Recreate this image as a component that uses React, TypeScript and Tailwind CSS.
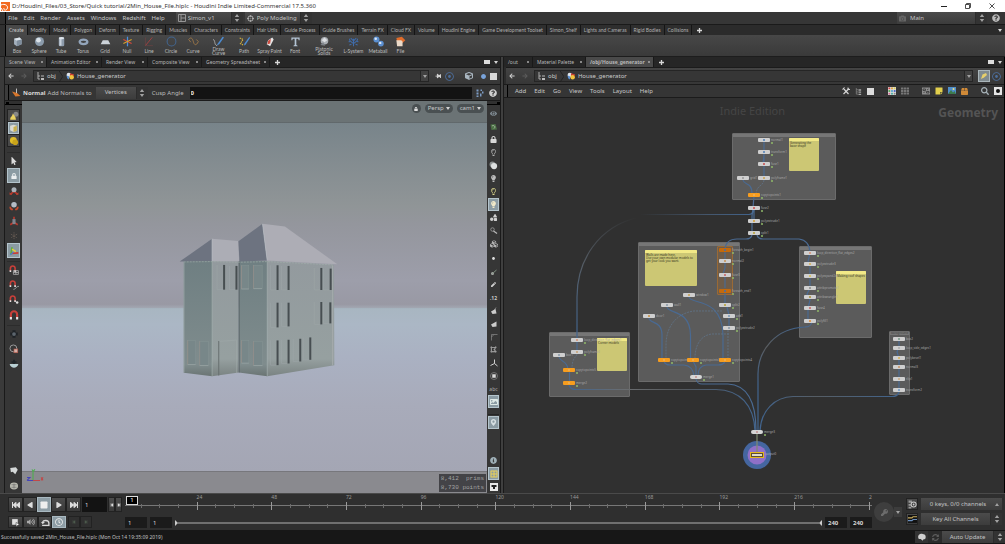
import React from "react";
import {
  FaLock, FaMousePointer, FaEye, FaLightbulb, FaRegLightbulb, FaQuestionCircle, FaInfoCircle,
  FaMapMarkerAlt, FaKey, FaThumbtack, FaSyncAlt, FaSearch, FaCube, FaCubes, FaShapes, FaPen,
  FaCamera, FaImage, FaBox, FaVolumeUp, FaRegClock,
  FaStepBackward, FaStepForward, FaFastBackward, FaFastForward, FaPlay, FaStop, FaCircle,
  FaRegDotCircle, FaTh, FaBorderAll, FaArrowLeft, FaArrowRight, FaStickyNote,
  FaCrosshairs, FaDrawPolygon,
} from "react-icons/fa";

type Kids = { children?: React.ReactNode };

function Caret({ className = "text-neutral-300" }: { className?: string }) {
  return (
    <svg viewBox="0 0 4 3" className={`h-[3px] w-[4px] shrink-0 ${className}`} aria-hidden="true">
      <path d="M0 0H4L2 3Z" fill="currentColor" />
    </svg>
  );
}

function UpDown() {
  return (
    <svg viewBox="0 0 6 8" className="pointer-events-none h-[8px] w-[6px] shrink-0 text-neutral-400" aria-hidden="true">
      <path d="M3 0L5.2 3H.8ZM3 8L.8 5H5.2Z" fill="currentColor" />
    </svg>
  );
}

function Plus() {
  return (
    <svg viewBox="0 0 6 6" className="h-[5px] w-[5px]" aria-hidden="true">
      <path d="M3 0V6M0 3H6" stroke="#d8d8d8" strokeWidth="1.6" />
    </svg>
  );
}

function Picker({ label, value, icon, className, center }: { label: string; value: string; icon?: React.ReactNode; className: string; center?: boolean }) {
  return (
    <div className={`flex items-center bg-gradient-to-b from-[#4b4b4b] to-[#3c3c3c] text-[#c4c4c4] ${className}`}>
      {icon}
      <select aria-label={label} className={`h-full min-w-0 flex-1 appearance-none bg-transparent leading-normal outline-none ${center ? "text-center" : ""}`} defaultValue={value}>
        <option>{value}</option>
      </select>
      <span className="flex h-full w-[12px] shrink-0 items-center justify-center border-l border-[#2c2c2c] bg-[#333]">
        <UpDown />
      </span>
    </div>
  );
}

/* ---------- Shelf ---------- */

const shelfTabs = [
  "Create", "Modify", "Model", "Polygon", "Deform", "Texture", "Rigging", "Muscles", "Characters", "Constraints",
  "Hair Utils", "Guide Process", "Guide Brushes", "Terrain FX", "Cloud FX", "Volume", "Houdini Engine",
  "Game Development Toolset", "Simon_Shelf", "Lights and Cameras", "Rigid Bodies", "Collisions",
];

const shelfTools: { name: string; width: string; art: React.ReactNode }[] = [
  { name: "Box", width: "w-[22px]", art: <><path d="M3 4L11 2L14 5V12L7 15L3 12Z" fill="#a4b0bd" /><path d="M3 4L11 2L14 5L7 7Z" fill="#dde4ea" /><path d="M7 7L14 5V12L7 15Z" fill="#7f8d9c" /></> },
  { name: "Sphere", width: "w-[22px]", art: <><circle cx="8" cy="8" r="6.6" fill="#8b9bab" /><circle cx="6.5" cy="6" r="3.4" fill="#dbe2e8" /></> },
  { name: "Tube", width: "w-[22px]", art: <><rect x="4" y="2" width="8" height="13" rx="2" fill="#8d9bab" /><rect x="5" y="4" width="3" height="10" fill="#c9d2dc" /><ellipse cx="8" cy="3" rx="4" ry="1.7" fill="#e0e6ec" /></> },
  { name: "Torus", width: "w-[22px]", art: <ellipse cx="8" cy="8.5" rx="5.6" ry="3.2" fill="none" stroke="#93a5bb" strokeWidth="3.4" /> },
  { name: "Grid", width: "w-[22px]", art: <path d="M4 6H12L15 12H1Z" fill="#ccd2d8" /> },
  { name: "Null", width: "w-[22px]", art: <><path d="M8 1V15" stroke="#4b90e0" strokeWidth="1.8" /><path d="M2 5L14 11" stroke="#d8493a" strokeWidth="1.8" /><path d="M14 5L2 11" stroke="#d6a32c" strokeWidth="1.8" /></> },
  { name: "Line", width: "w-[22px]", art: <><path d="M2 14L12 2" stroke="#b04040" strokeWidth="1.2" /><path d="M2 14H13M2 2V14" stroke="#744" strokeWidth=".8" /></> },
  { name: "Circle", width: "w-[22px]", art: <circle cx="8" cy="8" r="6.4" fill="none" stroke="#42658f" strokeWidth="1.5" /> },
  { name: "Curve", width: "w-[22px]", art: <path d="M1 5C5 0 7 5 8 9S12 15 15 8M1 5L4 9M12 5L15 8" fill="none" stroke="#a07848" strokeWidth="1.3" /> },
  { name: "Draw Curve", width: "w-[29px]", art: <><path d="M14 1L7 11L5 14L9 12L16 2Z" fill="#4d8bd0" /><path d="M0 5C4 6 1 13 6 14" stroke="#bbb" strokeWidth="1.2" fill="none" /></> },
  { name: "Path", width: "w-[22px]", art: <><path d="M15 1L8 11L7 14L10 12L16 3Z" fill="#4d8bd0" /><path d="M1 3L6 5L2 11L6 13" stroke="#d8b43c" strokeWidth="1.6" strokeDasharray="2 1" fill="none" /></> },
  { name: "Spray Paint", width: "w-[29px]", art: <><path d="M6 6L12 2L14 5L9 15L4 12Z" fill="#e6e6e6" /><path d="M6 7L10 4L9 11L5 12Z" fill="#cc4c40" /></> },
  { name: "Font", width: "w-[22px]", art: <path d="M2 2H14V6H12.6L12 4H9.2V13L11 14V15H5V14L6.8 13V4H4L3.4 6H2Z" fill="#b4c4d4" /> },
  { name: "Platonic Solids", width: "w-[36px]", art: <><circle cx="8" cy="7" r="5.5" fill="#a8adb2" /><path d="M4 6L8 2L12 6L8 9Z" fill="#dcdfe2" /><path d="M2 13L6 9L9 14Z" fill="#7c8288" /></> },
  { name: "L-System", width: "w-[23px]", art: <path d="M8 15V4M8 11L3 7M8 11L13 7M8 7L4 3M8 7L12 3M3 7L1 9M3 7L2 4M13 7L15 9M13 7L14 4M5 12L2 13M11 12L14 13" stroke="#3f6cab" strokeWidth="1.5" fill="none" /> },
  { name: "Metaball", width: "w-[26px]", art: <><circle cx="5" cy="5" r="4.4" fill="#5b8fd0" /><circle cx="4" cy="4" r="1.8" fill="#dbe8f6" /><circle cx="11.5" cy="11" r="4.2" fill="#5b8fd0" /><circle cx="10.5" cy="10" r="1.8" fill="#dbe8f6" /></> },
  { name: "File", width: "w-[19px]", art: <><path d="M2 3L10 1L15 6L12 9L4 14Z" fill="#e06c2a" /><path d="M2 6H9L11 8V15H3Z" fill="#ead9c8" /></> },
];

function Shelf() {
  return (
    <section aria-label="Shelf" className="flex border-b border-[#1d1d1d] bg-[#2b2b2b] font-['Lato',sans-serif]">
      <div className="w-[6px] shrink-0 border-r border-black bg-[#303030]" />
      <div className="min-w-0 flex-1">
        <div className="flex h-[10px] items-stretch text-[5px] leading-[10px] text-[#b0b0b0]">
          {shelfTabs.map((t, i) => (
            <button key={t} className={`shrink-0 border-r border-[#151515] px-[3px] ${i === 0 ? "bg-[#484848] text-[#c8c8c8]" : "bg-[#2e2e2e]"}`}>{t}</button>
          ))}
          <button aria-label="Add shelf" className="flex w-[14px] items-center justify-center"><Plus /></button>
          <div className="flex flex-1 items-center justify-end pr-[3px]"><Caret /></div>
        </div>
        <div className="flex h-[21px] bg-gradient-to-b from-[#474747] to-[#3a3a3a] text-[#bcbcbc]">
          {shelfTools.map((t) => (
            <button key={t.name} className={`flex shrink-0 flex-col items-center pt-[1px] ${t.width}`}>
              <svg viewBox="0 0 16 16" className="h-[11px] w-[11px] shrink-0" aria-hidden="true">{t.art}</svg>
              <span className={`text-[5px] ${t.name === "Draw Curve" || t.name === "Platonic Solids" ? "w-[20px] leading-[4px]" : "whitespace-nowrap leading-[8px]"}`}>{t.name}</span>
            </button>
          ))}
        </div>
      </div>
    </section>
  );
}

/* ---------- Pane header pieces ---------- */

function PaneTabs({ tabs, active, bold }: { tabs: { name: string; w: string }[]; active: number; bold?: boolean }) {
  return (
    <div className="flex h-[10px] shrink-0 bg-[#262626] text-[5px] leading-[10px] text-[#b8b8b8]">
      {tabs.map((t, i) => (
        <button key={t.name} className={`flex shrink-0 items-center justify-between border-r border-[#191919] pr-[3px] pl-[4px] whitespace-nowrap ${t.w} ${i === active ? (bold ? "bg-[#4a4a4a] font-bold" : "bg-[#3b3b3b]") : ""}`}>
          {t.name}
          <span className="h-[2px] w-[2px] rounded-full bg-[#aaa]" />
        </button>
      ))}
      <button aria-label="New tab" className="flex w-[14px] items-center justify-center"><Plus /></button>
      <div className="flex flex-1 items-center justify-end gap-[4px] pr-[2px]">
        <span className="h-[4px] w-[6px] bg-[#dcdcdc]" />
        <Caret />
      </div>
    </div>
  );
}

function HouseIcon() {
  return (
    <svg viewBox="0 0 16 14" className="h-[8px] w-[9px] shrink-0" aria-hidden="true">
      <circle cx="5" cy="5" r="4" fill="#dfe4ea" />
      <path d="M7 2L14 4L13 10L7 11Z" fill="#cc3c32" />
      <circle cx="10" cy="9" r="4" fill="#f0c33c" />
      <path d="M1 6L6 8L5 13L2 11Z" fill="#5b8fd0" />
    </svg>
  );
}

function PathBar({ children }: Kids) {
  return (
    <div className="flex h-[17px] shrink-0 items-center border-t border-[#1b1b1b] bg-gradient-to-b from-[#444] to-[#363636] px-[3px]">
      <button aria-label="Back" className="flex w-[13px] items-center"><FaArrowLeft size={6} color="#d0d0d0" /></button>
      <button aria-label="Forward" className="flex w-[12px] items-center"><FaArrowRight size={6} color="#5c5c5c" /></button>
      <nav aria-label="Network path" className="flex h-[12px] min-w-0 flex-1 items-center border border-[#252525] bg-[#363636] text-[6px] text-[#cacaca]">
        <svg viewBox="0 0 8 8" className="ml-[3px] h-[8px] w-[8px]" aria-hidden="true">
          <path d="M1 0V7H3M1 4H3" stroke="#aaa" fill="none" /><rect x="4" y="3" width="3" height="2" fill="#777" /><rect x="4" y="6" width="3" height="2" fill="#bbb" />
        </svg>
        <a href="#obj" className="ml-[2px]">obj</a>
        <svg viewBox="0 0 4 12" className="mx-[3px] h-[11px] w-[4px]" aria-hidden="true"><path d="M0 0L4 6L0 12" fill="none" stroke="#222" /></svg>
        <HouseIcon />
        <a href="#house" className="ml-[2px] flex-1">House_generator</a>
        <button aria-label="Path history" className="flex h-full w-[8px] items-center justify-center border-l border-[#252525] bg-[#414141]"><Caret className="text-neutral-400" /></button>
      </nav>
      {children}
    </div>
  );
}

/* ---------- Viewport ---------- */

function ToolButton({ label, active, children, size = "h-[15px]" }: Kids & { label: string; active?: boolean; size?: string }) {
  return (
    <button aria-label={label} className={`flex w-full shrink-0 items-center justify-center ${size} ${active ? "border border-[#b4c4cc] bg-[#8b9ba3]" : ""}`}>
      {children}
    </button>
  );
}

function Art({ children, s = "h-[10px] w-[10px]" }: Kids & { s?: string }) {
  return <svg viewBox="0 0 16 16" className={s} aria-hidden="true">{children}</svg>;
}

function LeftTools() {
  return (
    <div className="flex w-[17px] shrink-0 flex-col bg-[#363636] px-[2px]">
      <div className="-mx-[2px] mb-[4px] flex h-[4px] items-center border-b border-black bg-[#303030] pl-[1px]"><span className="h-[2px] w-[3px] bg-black" /></div>
      <div className="flex flex-col gap-px border border-[#222] bg-[#222]">
        <div className="bg-[#4a4a4a]"><ToolButton label="Objects" size="h-[11px]"><Art><circle cx="11" cy="5" r="4" fill="#888" /><path d="M2 14C2 8 5 10 6 4C9 8 11 9 11 14Z" fill="#e8d060" /></Art></ToolButton></div>
        <ToolButton label="Geometry" size="h-[12px]" active><Art><path d="M2 4L8 2L14 4V13L8 15L2 12Z" fill="#dcdcd2" /><path d="M8 6L14 4V13L8 15Z" fill="#c8b050" /></Art></ToolButton>
        <div className="bg-[#4a4a4a]"><ToolButton label="Dynamics" size="h-[11px]"><Art><circle cx="7" cy="7" r="5.5" fill="#e0bd28" /><circle cx="10" cy="10" r="4.5" fill="#c9a41a" /></Art></ToolButton></div>
      </div>
      <div className="mt-[5px] flex flex-col border-t border-[#2c2c2c]">
        <ToolButton label="Select"><FaMousePointer size={8} color="#dcdcdc" /></ToolButton>
        <ToolButton label="Secure selection" active><FaLock size={6} color="#eceff0" /></ToolButton>
        <ToolButton label="Move"><Art><path d="M8 8L3 13M8 8L13 13" stroke="#b8392e" strokeWidth="2.6" /><path d="M1 10V14H5ZM15 10V14H11Z" fill="#c9402f" /><circle cx="8" cy="6" r="4" fill="#aab2ba" /></Art></ToolButton>
        <ToolButton label="Rotate"><Art><path d="M2 9C2 15 6 13 6 13M14 9C14 15 10 13 10 13" stroke="#c4492e" strokeWidth="3" fill="none" /><circle cx="8" cy="6" r="4.4" fill="#b4bcc6" /></Art></ToolButton>
        <ToolButton label="Scale"><Art><path d="M8 1V10M8 10L2 14M8 10L14 14" stroke="#b8392e" strokeWidth="2.6" /><rect x="5.5" y="5" width="5" height="8" fill="#7d858e" /></Art></ToolButton>
        <ToolButton label="Pose"><Art><path d="M8 2V14M3 5L13 11M13 5L3 11" stroke="#665a52" strokeWidth="1.4" strokeDasharray="2 1" /></Art></ToolButton>
        <ToolButton label="Handles" active><Art><path d="M3 13L5 2" stroke="#5fae3c" strokeWidth="2.6" /><path d="M4 12L15 11" stroke="#cf3c30" strokeWidth="2.6" /><path d="M5 5L11 9" stroke="#e4cf3c" strokeWidth="2.6" /><path d="M2 14L7 10" stroke="#4a7cc8" strokeWidth="2" /></Art></ToolButton>
      </div>
      <div className="mt-[3px] flex flex-col border-t border-[#2c2c2c]">
        {["Grid snapping", "Primitive snapping", "Point snapping", "Multi snapping"].map((n, i) => (
          <ToolButton key={n} label={n}>
            <Art>
              <g transform={i === 3 ? "translate(0 0)" : "scale(.75)"}>
                <path d="M3 13V7A5 5 0 0 1 13 7V13" stroke="#c9403a" strokeWidth="3.4" fill="none" />
                <path d="M3 15V11M13 15V11" stroke="#e4e4e4" strokeWidth="3.4" />
              </g>
              {i === 0 && <path d="M7 9H15V15H7ZM11 9V15M7 12H15" stroke="#ccc" fill="none" />}
              {i === 1 && <path d="M7 15C11 15 11 10 16 10" stroke="#ccc" fill="none" />}
              {i === 2 && <circle cx="13" cy="12" r="2" fill="#ddd" />}
            </Art>
          </ToolButton>
        ))}
      </div>
      <div className="mt-[3px] flex flex-col border-t border-[#2c2c2c]">
        <ToolButton label="View pivot"><Art><path d="M8 2V14M2 8H14" stroke="#1e2226" strokeWidth="5" /><circle cx="8" cy="8" r="3" fill="#5c656d" /></Art></ToolButton>
        <ToolButton label="Construction plane"><Art><circle cx="7" cy="7" r="5.5" fill="none" stroke="#999" strokeWidth="1.6" /><rect x="8" y="8" width="6" height="6" fill="#d3b0a8" stroke="#b8594a" /></Art></ToolButton>
        <ToolButton label="Inspect"><Art><path d="M1 8C3 16 13 16 15 8Z" fill="#b9d0d4" /><path d="M8 1V8M4 5H12" stroke="#20262a" strokeWidth="3" /></Art></ToolButton>
      </div>
      <div className="mt-auto flex flex-col">
        <ToolButton label="Render region"><Art><path d="M2 3L11 2L14 6L10 13L6 9L3 10Z" fill="#d4d8d8" /></Art></ToolButton>
        <ToolButton label="Flipbook"><Art><ellipse cx="8" cy="8" rx="6.5" ry="5.5" fill="#b9bab0" /><path d="M4 6H12M4 10H12M8 4V12" stroke="#666" /></Art></ToolButton>
      </div>
    </div>
  );
}

const displayTop: [string, React.ReactNode, boolean?][] = [
  ["Display", <FaEye size={7} color="#7f8a92" />],
  ["Visibility", <Art s="h-[8px] w-[8px]"><path d="M1 3L11 2L14 13L3 14Z" fill="#4c7046" /><path d="M4 6C8 3 12 8 8 11" stroke="#b9c8b4" strokeWidth="1.6" fill="none" /></Art>],
  ["Lock camera", <FaLock size={7} color="#d9d9d9" />],
  ["Lighting off", <FaRegLightbulb size={7} color="#b0b0b0" />],
  ["Shading", <Art s="h-[9px] w-[9px]"><circle cx="6" cy="6" r="5" fill="#8c9090" /><circle cx="9" cy="9" r="5.5" fill="#dde0e0" /></Art>],
  ["Headlight", <FaLightbulb size={7} color="#bdbdbd" />],
  ["Normal lighting", <FaRegLightbulb size={7} color="#d9d48a" />],
  ["High quality lighting", <FaLightbulb size={7} color="#f0e8c8" />, true],
  ["Shadows", <FaShapes size={7} color="#d0d0d0" />],
  ["Points", <Art s="h-[8px] w-[8px]"><circle cx="5" cy="5" r="3.5" fill="none" stroke="#a0a0a0" strokeWidth="1.6" /><path d="M7 8L14 13" stroke="#b8b8b8" strokeWidth="2.6" /></Art>],
  ["Objects", <FaCubes size={8} color="#b4b4b4" />],
];
const displayMid: [string, React.ReactNode, boolean?][] = [
  ["Point markers", <FaCircle size={3} color="#dedede" />],
  ["Point normals", <Art s="h-[8px] w-[8px]"><circle cx="5" cy="11" r="3" fill="#a4a8a4" /><path d="M5 11L13 4" stroke="#7f8f7f" strokeWidth="2" /></Art>],
  ["Point trails", <FaPen size={5} color="#cfcfcf" />],
  ["Point numbers", <span className="text-[5px] font-bold text-[#ccc]">.12</span>],
  ["Primitive normals", <Art s="h-[8px] w-[8px]"><path d="M2 9L11 4L13 13L5 14Z" fill="#ccc" /><path d="M7 9L12 1" stroke="#ccc" /></Art>],
  ["Primitive numbers", <Art s="h-[8px] w-[8px]"><path d="M2 9L13 3V13L5 14Z" fill="#ccc" /></Art>],
  ["Hulls", <Art s="h-[8px] w-[8px]"><path d="M3 15V3H15M3 8L8 3" stroke="#8a8a8a" strokeWidth="1.4" fill="none" /></Art>],
  ["Breakpoints", <FaDrawPolygon size={7} color="#b4b4b4" />],
  ["Axis", <Art s="h-[8px] w-[8px]"><path d="M9 1V9L1 13M9 9L15 14" stroke="#d0d0d0" strokeWidth="2" fill="none" /></Art>],
  ["Selection", <Art s="h-[8px] w-[8px]"><circle cx="8" cy="8" r="7" fill="none" stroke="#8a8a8a" strokeWidth="1.4" /><rect x="4.5" y="4.5" width="7" height="7" fill="#d8d8d8" /></Art>],
  ["Text", <span className="text-[5px] text-[#aaa]">abc</span>],
  ["Background image", <FaImage size={8} color="#dfe9e6" />, true],
];

function RightTools() {
  return (
    <div className="flex w-[13px] shrink-0 flex-col bg-[#363636] px-px">
      <div className="-mx-px mb-[2px] flex h-[4px] items-center justify-end border-b border-black bg-[#303030]"><span className="h-[2px] w-[3px] bg-black" /></div>
      {displayTop.map(([n, g, a]) => <ToolButton key={n} label={n} active={a} size="h-[13px]">{g}</ToolButton>)}
      <div className="mt-[2px]">{displayMid.map(([n, g, a]) => <ToolButton key={n} label={n} active={a} size="h-[13px]">{g}</ToolButton>)}</div>
      <div className="mt-[6px] border-t border-[#262626] pt-[1px]"><ToolButton label="Pin" active size="h-[13px]"><FaMapMarkerAlt size={7} color="#d6dfe2" /></ToolButton></div>
      <div className="mt-auto">
        <ToolButton label="Info" size="h-[13px]"><FaInfoCircle size={7} color="#9fb0b8" /></ToolButton>
        <ToolButton label="Layout" active size="h-[13px]"><FaBorderAll size={8} color="#ecd25a" /></ToolButton>
        <ToolButton label="Snapshot" size="h-[13px]"><Art s="h-[8px] w-[8px]"><rect width="16" height="16" fill="#e8e8e8" /><path d="M3 4H13V8H10V12H6V8H3Z" fill="#222" /></Art></ToolButton>
      </div>
    </div>
  );
}

/* Slit windows on the lit facades as [x, top, bottom], in house units. */
const slits: [number, number, number][] = [
  [191, 165, 239], [228, 168, 239], [351, 166, 240], [384, 168, 240], [482, 174, 240], [510, 176, 240],
  [351, 278, 352], [384, 278, 349], [482, 276, 343], [509, 277, 340],
  [351, 391, 465], [384, 389, 460], [419, 386, 454], [449, 382, 449],
];
const panes: [number, number, number, number][] = [
  [82, 391, 24, 72], [118, 394, 26, 72], [243, 167, 22, 70], [279, 166, 26, 70], [243, 391, 22, 68], [279, 394, 27, 72],
];

function Scene() {
  return (
    <svg viewBox="0 0 464 392" preserveAspectRatio="xMidYMid slice" className="absolute inset-0 h-full w-full" aria-label="House model">
      <defs>
        <linearGradient id="sky" x1="0" y1="0" x2="0" y2="1">
          <stop offset="0" stopColor="#78848a" /><stop offset=".45" stopColor="#909597" /><stop offset=".55" stopColor="#94969d" /><stop offset=".85" stopColor="#9d9eaa" /><stop offset=".98" stopColor="#9999a4" /><stop offset="1" stopColor="#a2a7b2" />
        </linearGradient>
        <linearGradient id="ground" x1="0" y1="0" x2="0" y2="1">
          <stop offset="0" stopColor="#a8b6c1" /><stop offset=".1" stopColor="#abb7c5" /><stop offset=".3" stopColor="#aab1c2" /><stop offset=".6" stopColor="#a8abba" /><stop offset="1" stopColor="#a4a6b4" />
        </linearGradient>
        <linearGradient id="dark" x1="0" y1="0" x2="0" y2="1"><stop offset="0" stopColor="#6f7f82" /><stop offset=".9" stopColor="#7f8c8d" /><stop offset="1" stopColor="#6a7473" /></linearGradient>
        <linearGradient id="lit" x1="0" y1="0" x2="0" y2="1"><stop offset="0" stopColor="#939a9e" /><stop offset=".85" stopColor="#96a0a0" /><stop offset="1" stopColor="#7a8382" /></linearGradient>
      </defs>
      <rect width="464" height="22" fill="#6b7375" />
      <rect y="22" width="464" height="185" fill="url(#sky)" />
      <rect y="207" width="464" height="163" fill="url(#ground)" />
      <rect y="370" width="464" height="22" fill="#8a8a8f" />
      <g transform="translate(138 109) scale(.33333)">
        <path d="M70 153H155V498L70 488Z" fill="url(#dark)" />
        <path d="M155 153L235 155V487L155 498Z" fill="url(#lit)" />
        <path d="M235 153H320V498L235 487Z" fill="url(#dark)" />
        <path d="M320 153L520 165L521 465L320 498Z" fill="url(#lit)" />
        <path d="M58 155L155 87V153Z" fill="#6d7380" />
        <path d="M155 87L233 93L236 154H155Z" fill="#acadb5" />
        <path d="M234 94L306 42L320 152L237 155Z" fill="#6d7380" />
        <path d="M306 42L373 50L530 163L320 152Z" fill="#adadb5" />
        <path d="M306 42L320 152M155 87V153" stroke="#bcc0c6" strokeWidth="2" />
        <path d="M155 155V498M320 155V498M71 157V487" stroke="#9fadab" strokeWidth="2" />
        <path d="M236 155V487" stroke="#5b6468" strokeWidth="3" />
        <path d="M516 167V465" stroke="#a6acad" strokeWidth="3" />
        <path d="M175 394L228 390V489" stroke="#a1aaaa" strokeWidth="1.5" fill="none" />
        <path d="M175 393V496" stroke="#666e6f" strokeWidth="3" />
        <path d="M70 156L155 155L235 157L320 155L520 165" stroke="#a1aeaa" strokeWidth="2" strokeDasharray="6 3" fill="none" />
        {panes.map(([x, y, w, h]) => (
          <g key={`${x}-${y}`}>
            <rect x={x} y={y} width={w} height={h} fill="#788789" stroke="#859494" strokeWidth="1.5" />
            <path d={`M${x} ${y}v${h}`} stroke="#968f8a" strokeWidth="2" />
            <path d={`M${x} ${y + h}h${w}`} stroke="#9aa6a6" strokeWidth="2" />
          </g>
        ))}
        {slits.map(([x, a, b]) => (
          <g key={`${x}-${a}`}>
            <path d={`M${x - 21} ${a}V${b}H${x - 4}`} stroke="#9fa6a9" strokeWidth="1.5" fill="none" />
            <path d={`M${x} ${a}V${b}`} stroke="#474e51" strokeWidth="6" />
          </g>
        ))}
      </g>
      <g strokeWidth="1" fill="none">
        <path d="M11 379V370M10 368L11 370L13 368" stroke="#4ab04a" /><path d="M11 379H18M19 376L21 379M21 376L19 379" stroke="#c04848" /><path d="M11 379H5M5 376H8L5 379" stroke="#4444b8" />
      </g>
    </svg>
  );
}

function SceneView() {
  const pill = "flex h-[9px] items-center gap-[2px] rounded-full bg-[#4a5052] px-[3px] text-[6px] leading-[9px] text-[#c8c8c8]";
  return (
    <section aria-label="Scene view" className="flex min-w-0">
      <div className="w-[5px] shrink-0 border-r border-[#1a1a1a] bg-[#3a3a3a]" />
      <div className="flex min-w-0 flex-1 flex-col">
        <PaneTabs active={0} tabs={[
          { name: "Scene View", w: "w-[42px]" }, { name: "Animation Editor", w: "w-[55px]" }, { name: "Render View", w: "w-[46px]" },
          { name: "Composite View", w: "w-[54px]" }, { name: "Geometry Spreadsheet", w: "w-[68px]" },
        ]} />
        <PathBar>
          <div className="flex items-center gap-[4px] pl-[6px]">
            <FaThumbtack size={6} color="#d0d0d0" className="rotate-90" />
            <FaRegDotCircle size={9} color="#4d6f9e" />
            <span className="w-[3px]" />
            <FaCube size={8} color="#a9b6c0" />
            <span className="flex w-[9px] justify-end"><FaCircle size={5} color="#79a3da" /></span>
            <span className="h-[7px] w-[7px] bg-[#dadada]" />
          </div>
        </PathBar>
        <div className="flex h-[17px] shrink-0 items-center border-y border-[#1b1b1b] bg-[#353535] pr-[3px] text-[6px] text-[#bcbcbc]">
          <span className="h-full w-[4px] border-r border-black bg-[#3c3c3c]" />
          <svg viewBox="0 0 16 14" className="ml-[3px] h-[9px] w-[9px]" aria-hidden="true"><path d="M0 5L9 8L15 13L6 14Z" fill="#d8772c" /><path d="M8 0V8" stroke="#cfcfcf" strokeWidth="1.6" /></svg>
          <strong className="ml-[2px] text-[#d8d8d8]">Normal</strong>
          <span className="ml-[2px]">Add Normals to</span>
          <Picker label="Add Normals to" value="Vertices" center className="ml-[4px] h-[12px] w-[52px]" />
          <label htmlFor="cusp" className="ml-[4px]">Cusp Angle</label>
          <input id="cusp" defaultValue="0" className="ml-[6px] h-[12px] min-w-0 flex-1 bg-[#131313] px-[1px] font-bold text-[#eee] outline-none" />
          <Art s="ml-[4px] h-[8px] w-[8px]"><path d="M1 1H5V5H1ZM1 7H5V11H1ZM1 13H5V16H1M8 9H11V15H8ZM12 5H15V9H12ZM9 1H12V4H9Z" fill="#7d9cc4" /></Art>
          <FaQuestionCircle size={8} color="#cfcfcf" className="ml-[5px]" />
        </div>
        <div className="flex min-h-0 flex-1">
          <LeftTools />
          <div className="relative min-w-0 flex-1 overflow-hidden">
            <Scene />
            <div className="absolute top-[3px] right-[3px] flex gap-[4px]">
              <button aria-label="Lock view" className="flex h-[9px] w-[9px] items-center justify-center rounded-full bg-[#4a5052]"><FaLock size={4} color="#ddd" /></button>
              <button className={pill}>Persp <Caret /></button>
              <button className={pill}>cam1 <Caret /></button>
            </div>
            <pre className="absolute right-[1px] bottom-[1px] bg-[#434347] px-[2px] font-['Liberation_Mono',monospace] text-[6px] leading-[9px] text-[#a2a2a2]">{"8,412  prims\n8,730 points"}</pre>
          </div>
          <RightTools />
        </div>
      </div>
      <div className="w-[4px] shrink-0 border-x border-[#1a1a1a] bg-[#3f3f3f]" />
    </section>
  );
}

/* ---------- Network editor ---------- */

const pan = { x: 504, y: 98 };
const at = (x: number, y: number) => ({ left: x - pan.x, top: y - pan.y });

const frames: [number, number, number, number, string?][] = [
  [732, 133, 104, 67], [638, 242, 102, 140], [549, 332, 81, 65], [799, 246, 73, 92], [889, 331, 21, 64, "background"],
];
const notes: [number, number, number, number, string][] = [
  [789, 138, 30, 33, "Generating the base shape"],
  [645, 250, 52, 36, "Walls are made here.\nUse your own modular models to get your look you want."],
  [597, 338, 30, 33, "Corner models"],
  [836, 271, 30, 33, "Making roof shapes"],
];
type Kind = "plain" | "orange" | "loop" | "merge";
const nodes: [number, number, string, string, Kind?][] = [
  [764, 140, "normal1", "#4d7fb8"], [764, 152, "transform1", "#4d7fb8"], [764, 164, "fuse1", "#c84c4c"], [764, 178, "polyframe1", "#c8a050"],
  [743, 178, "grid1", "#999"], [754, 195, "copytopoints1", "#e8b060", "orange"], [754, 208, "fuse2", "#c84c4c"], [754, 221, "polyextrude1", "#d8a030"], [754, 233, "split1", "#b8a030"],
  [725, 250, "foreach_begin1", "#3f70b0", "loop"], [725, 261, "normal2", "#c89050"], [725, 275, "fuse3", "#c86060"], [725, 291, "foreach_end1", "#3f70b0", "loop"],
  [689, 295, "window1", "#c8a050"], [667, 305, "wall1", "#8898a8"], [649, 316, "door1", "#c89040"], [725, 305, "split2", "#b8a030"], [729, 316, "add1", "#7898b8"], [729, 328, "polyextrude2", "#8898a8"],
  [664, 360, "copytopoints2", "#e8b060", "orange"], [693, 360, "copytopoints3", "#e8b060", "orange"], [725, 360, "copytopoints4", "#e8b060", "orange"], [696, 377, "merge1", "#c09090", "merge"],
  [577, 340, "loop_direction_flat_edges1", "#d89070"], [577, 352, "polyframe2", "#c8a070"], [559, 355, "box1", "#8898a8"], [569, 370, "copytopoints5", "#e8b060", "orange"], [569, 383, "merge2", "#e8b060", "orange"],
  [810, 253, "loop_direction_flat_edges2", "#d89070"], [810, 264, "polyextrude3", "#d8b050"], [810, 276, "polyexpand2d1", "#d8c050"], [810, 288, "attribpromote1", "#888"], [810, 297, "attribwrangle1", "#a89030"], [810, 308, "fuse4", "#c86060"], [810, 321, "polyfill1", "#e08a30"],
  [899, 339, "box2", "#779988"], [899, 348, "loop_side_edges1", "#aaa"], [899, 358, "polybevel1", "#d8b050"], [899, 367, "normal3", "#c89060"], [899, 379, "clip1", "#c8a880"], [899, 390, "transform2", "#6898c8"],
  [757, 432, "merge3", "#c09090", "merge"],
];
const undotted = ["grid1", "window1", "wall1", "door1", "box1"];

const solidWires = [
  "M764 142V178M764 154L763 164M743 180C744 186 752 181 752 194M754 196L753 208L752 216V232M754 208V221",
  "M752 235Q751 239 746 239H737Q726 239 725 249", "M757 235Q758 239 763 239H799Q809 240 810 252",
  "M725 252V268L723 274L725 278V288M725 292V304M727 307L729 315V328",
  "M649 318C649 324 662 320 662 335V358", "M667 307C668 314 690 309 690.5 335V358", "M689 297C690 305 722 296 723 335V358",
  "M664 361Q665 365 670 365H684Q693 366 694 376", "M693 361L696 367V376", "M725 361Q724 365 718 365H706Q698 366 698 376",
  "M577 341V352M559 357C560 362 567 360 568 369M569.5 371V382M696 379Q697 384 702 384H728C748 385 756 402 756 431",
  "M810 253L808 262L810 266V288L807 294L810 300L808 308V320M899 340V346L897 352L899 358V390",
  "M812 322Q811 327 805 327",
];

function Network() {
  return (
    <div className="relative min-h-0 flex-1 overflow-hidden bg-[#303030]">
      <div className="absolute top-[6px] right-[219px] text-[11px] leading-[14px] text-[#454545]">Indie Edition</div>
      <div className="absolute top-[7px] right-[6px] text-[12px] leading-[16px] font-bold text-[#545454]">Geometry</div>
      {frames.map(([x, y, w, h, t]) => (
        <div key={`${x}-${y}`} className="absolute overflow-hidden rounded-[1px] border border-[#6b6b6b] bg-[#5b5b5b]" style={{ ...at(x, y), width: w, height: h }}>
          <div className="h-[3px] bg-[#767676] text-center text-[3px] leading-[3px] text-[#444]">{t}</div>
        </div>
      ))}
      <div className="absolute h-[49px] w-[16px] rounded-[1px] border border-[#9a6a36] bg-[#6f5d4a]" style={at(717, 246)} />
      <svg className="absolute inset-0 h-full w-full" aria-hidden="true">
        <defs>
          <linearGradient id="fade" gradientUnits="userSpaceOnUse" x1="577" y1="335" x2="630" y2="214"><stop offset="0" stopColor="#41648e" /><stop offset=".5" stopColor="#555d66" /><stop offset="1" stopColor="#303030" /></linearGradient>
          <linearGradient id="fadeRight" gradientUnits="userSpaceOnUse" x1="640" y1="0" x2="754" y2="0"><stop offset="0" stopColor="#303030" /><stop offset=".6" stopColor="#44566c" /><stop offset="1" stopColor="#41648e" /></linearGradient>
          <linearGradient id="long" gradientUnits="userSpaceOnUse" x1="569" y1="0" x2="755" y2="0"><stop offset="0" stopColor="#41648e" /><stop offset=".3" stopColor="#6a6d70" /><stop offset=".6" stopColor="#55595d" /><stop offset="1" stopColor="#41648e" /></linearGradient>
          <linearGradient id="roof" gradientUnits="userSpaceOnUse" x1="800" y1="327" x2="758" y2="385"><stop offset="0" stopColor="#41648e" /><stop offset=".5" stopColor="#5a5d60" /><stop offset="1" stopColor="#41648e" /></linearGradient>
          <linearGradient id="back" gradientUnits="userSpaceOnUse" x1="899" y1="0" x2="760" y2="0"><stop offset="0" stopColor="#41648e" /><stop offset=".6" stopColor="#565d64" /><stop offset="1" stopColor="#41648e" /></linearGradient>
        </defs>
        <g transform={`translate(${-pan.x} ${-pan.y})`} fill="none" strokeWidth="1.2">
          <path d="M577 339V297C577 262 597 226 640 217" stroke="url(#fade)" />
          <path d="M640 214.5H749Q753 214 754 210" stroke="url(#fadeRight)" />
          <path d="M569 385Q570 389.5 576 389.5H716C740 390 754 405 755 431" stroke="url(#long)" />
          <path d="M805 327C776 328 758 350 758 374V431" stroke="url(#roof)" />
          <path d="M899 392Q898 396.5 892 396.5H793C775 397 761 410 760 431" stroke="url(#back)" />
          <g stroke="#4a6a92">{solidWires.map((d) => <path key={d} d={d} />)}</g>
          <g stroke="#607389" strokeDasharray="2 1" strokeWidth=".8">
            <path d="M722 311H694C678 313 666 325 666 345V358" /><path d="M729 334H712C701 335 695 345 695 358" /><path d="M728 330V358" /><path d="M764 180C763 187 757 184 756 194" /><path d="M577 354C576 358 572 357 572 369" />
          </g>
          <circle cx="757" cy="455" r="14" fill="#4566a0" />
          <circle cx="757" cy="455" r="9.5" fill="#8f70c8" />
          <path d="M757 433V454" stroke="#7f8a70" />
        </g>
      </svg>
      {notes.map(([x, y, w, h, t]) => (
        <div key={t} className="absolute overflow-hidden rounded-[1px] bg-[#ccc774]" style={{ ...at(x, y), width: w, height: h }}>
          <div className="h-[3px] bg-[#f2e987]" />
          <p className="px-[1px] pt-[1px] text-[3px] leading-[3px] whitespace-pre-line text-[#34331f]">{t}</p>
        </div>
      ))}
      {nodes.map(([x, y, name, dot, kind = "plain"]) => (
        <div key={`${x}-${y}`} className="absolute flex h-[4px] items-center" style={at(x - 6, y - 2)}>
          <span className={`flex h-[4px] w-[12px] shrink-0 items-center justify-center ${kind === "orange" ? "rounded-[1px] bg-[#f79d1e]" : kind === "loop" ? "rounded-[1px] bg-[#c46a0c]" : kind === "merge" ? "rounded-full bg-[#d6d6d6]" : "rounded-[1px] bg-[#cfcfcf]"}`}>
            <span className="h-[2px] w-[2px] rounded-full" style={{ backgroundColor: dot }} />
          </span>
          <span className="ml-px text-[3px] leading-[4px] whitespace-nowrap text-[#a8a8a8]">{name}</span>
          {x < 890 && !undotted.includes(name) && <span className="absolute top-[4px] left-[13px] h-[2px] w-[2px] rounded-full bg-[#8fb868]" />}
        </div>
      ))}
      <div className="absolute flex h-[6px] w-[14px] items-center justify-center border border-[#e2b71c] bg-[#5d4d34]" style={at(750, 452)}><span className="h-[2px] w-[10px] bg-[#dedad0]" /></div>
      <span className="absolute text-[3px] leading-[4px] text-[#aaa]" style={at(765, 452)}>output0</span>
    </div>
  );
}

function NetworkEditor() {
  return (
    <section aria-label="Network editor" className="flex min-w-0 flex-col border-r border-black">
      <PaneTabs active={2} bold tabs={[{ name: "/out", w: "w-[29px]" }, { name: "Material Palette", w: "w-[53px]" }, { name: "/obj/House_generator", w: "w-[68px]" }]} />
      <div className="pl-[2px]">
        <PathBar>
          <button aria-label="Pin network" className="ml-[5px] flex h-[12px] w-[12px] items-center justify-center border border-[#a9b5ba] bg-[#7f8a8f]"><Art s="h-[8px] w-[8px]"><path d="M2 14L5 5L12 2L14 6L8 11Z" fill="#e6cf6c" /></Art></button>
          <FaRegDotCircle size={9} color="#4d6f9e" className="ml-[2px]" />
        </PathBar>
      </div>
      <div className="flex h-[14px] shrink-0 items-center border-y border-[#1b1b1b] bg-[#353535] text-[6px] text-[#c8c8c8]">
        <span className="h-full w-[4px] border-r border-black bg-[#3c3c3c]" />
        <nav className="flex flex-1 gap-[8px] pl-[7px]">
          {["Add", "Edit", "Go", "View", "Tools", "Layout", "Help"].map((m) => <button key={m}>{m}</button>)}
        </nav>
        <div className="flex items-center gap-[5px] pr-[2px]">
          <Art s="h-[8px] w-[8px]"><path d="M2 2L13 14M14 3L3 14" stroke="#d4d4d4" strokeWidth="2.4" /><path d="M1 5L5 1M12 1V5H16" stroke="#d4d4d4" strokeWidth="2" fill="none" /></Art>
          <Art s="h-[7px] w-[7px]"><path d="M3 0V14H7M3 4H7M3 9H7" stroke="#8a8a8a" strokeWidth="1.6" fill="none" /><path d="M8 3H14V6H8ZM8 8H14V11H8ZM8 13H14V16H8Z" fill="#a8a8a8" /></Art>
          <span className="h-[7px] w-[7px] bg-[#dcdcdc]" />
          <svg viewBox="0 0 9 9" className="ml-[9px] h-[8px] w-[8px]" aria-hidden="true"><rect width="9" height="9" fill="#ddd" />{["#d04040", "#e0a030", "#e0d050", "#50a050", "#50a0d0", "#4060c0", "#d06a90", "#40b0a0", "#888"].map((c, i) => <rect key={c} x={(i % 3) * 3 + 0.5} y={Math.floor(i / 3) * 3 + 0.5} width="2" height="2" fill={c} />)}</svg>
          <FaTh size={8} color="#777" />
          <Art s="ml-[8px] h-[8px] w-[8px]"><rect y="1" width="16" height="14" fill="#8c8c8c" /><path d="M2 4H7V7H2ZM9 9H14V12H9ZM3 12L6 9M10 6L13 4" stroke="#2b2b2b" strokeWidth="1.4" fill="none" /></Art>
          <FaStickyNote size={8} color="#e2cf4c" />
          <Art s="h-[8px] w-[8px]"><rect width="16" height="14" fill="#4f8fcc" /><path d="M0 14L6 6L10 11L13 8L16 14Z" fill="#3d7a4c" /><circle cx="11" cy="4" r="2" fill="#f0e080" /></Art>
          <FaBox size={7} color="#d08a38" />
          <FaSearch size={8} color="#a8b4ba" className="ml-[8px]" />
          <Art s="h-[8px] w-[8px]"><rect width="16" height="16" fill="#e4e4e4" /><circle cx="8" cy="8" r="4" fill="#111" /></Art>
        </div>
      </div>
      <Network />
    </section>
  );
}

/* ---------- Playbar ---------- */

function Cell({ label, children, className, on, off }: Kids & { label: string; className: string; on?: boolean; off?: boolean }) {
  return (
    <button aria-label={label} className={`flex shrink-0 items-center justify-center border ${on ? "border-[#a9b9c1] bg-[#8d9da5]" : off ? "border-[#222] bg-[#303030]" : "border-[#222] bg-gradient-to-b from-[#4c4c4c] to-[#3a3a3a]"} ${className}`}>{children}</button>
  );
}

const LAST = 240;
const ticks = Array.from({ length: 41 }, (_, i) => i * 6).filter((f) => f > 0);
const frameLeft = (f: number) => `${((f - 1) / LAST) * 100}%`;

function Playbar() {
  const field = "h-[11px] w-[22px] shrink-0 bg-[#1b1b1b] px-[3px] text-[#d8d8d8] outline-none";
  return (
    <section aria-label="Playbar" className="flex h-[37px] shrink-0 border-t border-[#4a4a4a] bg-[#2f2f2f] pl-[8px] text-[6px]">
      <div className="flex w-[117px] shrink-0 flex-col gap-[4px] pt-[3px]">
        <div className="flex h-[15px]">
          <Cell label="First frame" className="w-[15px]"><FaFastBackward size={8} color="#ddd" /></Cell>
          <Cell label="Play reverse" className="w-[14px]"><FaPlay size={6} color="#ddd" className="rotate-180" /></Cell>
          <Cell label="Stop" className="w-[14px]" on><FaStop size={8} color="#eee" /></Cell>
          <Cell label="Play" className="w-[15px]"><FaPlay size={6} color="#ddd" /></Cell>
          <Cell label="Last frame" className="w-[15px]"><FaFastForward size={8} color="#ddd" /></Cell>
          <input aria-label="Current frame" defaultValue="1" className="ml-[1px] h-[15px] w-[25px] bg-[#131313] px-[3px] text-[#d8d8d8] outline-none" />
          <Cell label="Previous frame" className="ml-[1px] w-[7px]"><FaStepBackward size={4} color="#ddd" /></Cell>
          <Cell label="Next frame" className="w-[7px]"><FaStepForward size={4} color="#ddd" /></Cell>
        </div>
        <div className="flex h-[12px]">
          <Cell label="Animation options" className="w-[15px]"><Art s="h-[9px] w-[9px]"><path d="M2 2H12V12H2Z" fill="#e0e0e0" /><path d="M9 8L15 11L9 15Z" fill="#fff" stroke="#333" /></Art></Cell>
          <Cell label="Audio" className="w-[15px]"><FaVolumeUp size={8} color="#aaa" /></Cell>
          <Cell label="Loop" className="w-[14px]"><Art s="h-[9px] w-[9px]"><path d="M2 13H14V9C14 3 3 3 3 8" stroke="#d8d8d8" strokeWidth="2.4" fill="none" /><path d="M0 7H7L3 11Z" fill="#d8d8d8" /></Art></Cell>
          <Cell label="Real time" className="w-[14px]" on><FaRegClock size={8} color="#f0f0f0" /></Cell>
          <Cell label="Previous key" className="ml-[2px] w-[12px]" off><FaStepBackward size={4} color="#4c5a4c" /></Cell>
          <Cell label="Next key" className="w-[12px]" off><FaStepForward size={4} color="#4c5a4c" /></Cell>
        </div>
      </div>
      <div className="flex min-w-0 flex-1 flex-col">
        <div className="relative h-[23px] overflow-hidden text-[5px] leading-[7px] text-[#9a9a9a]">
          <div className="absolute top-[11px] right-0 left-0 h-px bg-[#777]" />
          {ticks.map((f) => (
            <div key={f} className={`absolute w-px ${f % 24 === 0 ? "top-[8px] h-[8px] bg-[#9a9a9a]" : "top-[10px] h-[4px] bg-[#6c6c6c]"}`} style={{ left: frameLeft(f) }} />
          ))}
          {ticks.filter((f) => f % 24 === 0).map((f) => <span key={f} className="absolute top-0" style={{ left: frameLeft(f) }}>{f === LAST ? "2" : f}</span>)}
          <span className="absolute top-[2px] left-[1px] flex h-[9px] w-[12px] items-center justify-center border border-[#ddd] bg-black text-[6px] leading-[7px] text-white">1</span>
        </div>
        <div className="flex items-center gap-[3px]">
          <input aria-label="Global start" defaultValue="1" className={field} />
          <input aria-label="Range start" defaultValue="1" className={field} />
          <div className="flex flex-1 items-center">
            <svg viewBox="0 0 3 6" className="h-[6px] w-[3px]" aria-hidden="true"><path d="M0 0L3 3L0 6Z" fill="#ccc" /></svg>
            <span className="h-[2px] flex-1 bg-[#707070]" />
            <svg viewBox="0 0 3 6" className="h-[6px] w-[3px]" aria-hidden="true"><path d="M3 0L0 3L3 6Z" fill="#ccc" /></svg>
          </div>
          <input aria-label="Range end" defaultValue="240" className={`${field} font-bold`} />
          <input aria-label="Global end" defaultValue="240" className={`${field} font-bold`} />
        </div>
      </div>
      <div className="ml-[2px] flex w-[32px] shrink-0 items-center">
        <button aria-label="Set key" className="flex h-[20px] w-[20px] items-center justify-center rounded-full bg-[#3e3e3e]"><FaKey size={7} color="#6c6c6c" /></button>
        <button aria-label="Key options" className="flex h-[10px] w-[8px] items-center justify-center bg-[#3c3c3c]"><Caret className="text-neutral-400" /></button>
      </div>
      <div className="flex w-[99px] shrink-0 flex-col gap-[3px] pt-[4px] pr-[3px]">
        <div className="flex h-[12px] gap-[3px]">
          <Cell label="Scoped channels" className="w-[12px]"><Art s="h-[9px] w-[9px]"><path d="M1 1H7V5H1ZM1 7H5V10H1ZM1 12H6V15H1Z" fill="#999" /><circle cx="10" cy="8" r="4.5" fill="none" stroke="#ccc" strokeWidth="1.8" /><circle cx="10" cy="8" r="1.6" fill="#ccc" /></Art></Cell>
          <button className="flex flex-1 items-center bg-gradient-to-b from-[#4b4b4b] to-[#3c3c3c] pr-[3px] text-[#c4c4c4]"><span className="flex-1">0 keys, 0/0 channels</span><Caret className="rotate-180 text-neutral-400" /></button>
        </div>
        <div className="flex h-[12px] gap-[3px]">
          <Cell label="Channel list" className="w-[12px]"><Art s="h-[9px] w-[9px]"><rect width="16" height="14" fill="#111" /><path d="M0 5H7L9 3H16" stroke="#ccb060" strokeWidth="2" fill="none" /><path d="M0 10H7L9 8H16" stroke="#6a90c0" strokeWidth="2" fill="none" /></Art></Cell>
          <Picker label="Key mode" value="Key All Channels" center className="min-w-0 flex-1" />
        </div>
      </div>
    </section>
  );
}

export default function App() {
  return (
    <div className="flex min-h-screen flex-col overflow-hidden bg-[#2b2b2b] font-['Noto_Sans',sans-serif] text-[6px] leading-[8px]">
      <header className="flex h-[12px] items-center bg-white text-[#333]">
        <svg viewBox="0 0 9 9" className="ml-[1px] h-[9px] w-[9px]" aria-hidden="true">
          <rect width="9" height="9" fill="#f26a21" /><path d="M0 3C4 1 8 4 6 7C5 9 2 8 3 6M0 6L2 9" stroke="#fff" fill="none" strokeWidth="1" />
        </svg>
        <h1 className="ml-[2px] flex-1 whitespace-nowrap">D:/Houdini_Files/03_Store/Quick tutorial/2Min_House_File.hiplc - Houdini Indie Limited-Commercial 17.5.360</h1>
        <div className="flex items-center gap-[18px] pr-[10px] text-[#222]">
          <button aria-label="Minimize"><svg viewBox="0 0 6 6" className="h-[6px] w-[6px]"><path d="M0 3.5H6" stroke="currentColor" /></svg></button>
          <button aria-label="Restore"><svg viewBox="0 0 6 6" className="h-[6px] w-[6px]"><path d="M.5 1.5H4.5V5.5H.5ZM1.5 1.5V.5H5.5V4.5H4.5" stroke="currentColor" strokeWidth=".8" fill="none" /></svg></button>
          <button aria-label="Close"><svg viewBox="0 0 6 6" className="h-[6px] w-[6px]"><path d="M.5 .5L5.5 5.5M5.5 .5L.5 5.5" stroke="currentColor" strokeWidth=".8" /></svg></button>
        </div>
      </header>
      <div className="flex h-[13px] items-center border-b border-[#1a1a1a] bg-[#363636] text-[#cacaca]">
        <span className="h-full w-[6px] border-r border-black bg-[#303030]" />
        <nav className="flex gap-[6px] pl-[2px]">
          {["File", "Edit", "Render", "Assets", "Windows", "Redshift", "Help"].map((m) => <button key={m}>{m}</button>)}
        </nav>
        <Picker label="Desktop" value="Simon_v1" className="ml-[11px] h-[12px] w-[67px] pl-[2px]" icon={
          <svg viewBox="0 0 8 8" className="mr-[2px] h-[8px] w-[8px]" aria-hidden="true"><path d="M.5 .5H7.5V7.5H.5ZM3 .5V7.5M3 4H7.5" stroke="#aaa" strokeWidth=".8" fill="none" /></svg>} />
        <Picker label="Radial menu" value="Poly Modeling" className="ml-[2px] h-[12px] w-[67px] pl-[2px]" icon={<FaCrosshairs size={7} color="#aaa" className="mr-[3px]" />} />
        <span className="flex-1" />
        <Picker label="Take" value="Main" className="h-[12px] w-[90px] pl-[2px]" icon={<FaCamera size={7} color="#666" className="mr-[4px]" />} />
        <FaQuestionCircle size={8} color="#bbb" className="mr-[5px] ml-[5px]" />
      </div>
      <Shelf />
      <main className="grid min-h-0 flex-1 grid-cols-[504fr_501fr]">
        <SceneView />
        <NetworkEditor />
      </main>
      <Playbar />
      <footer className="flex h-[14px] shrink-0 items-center bg-[#171717] text-[5px] text-[#c0c0c0]">
        <p className="flex-1 pl-[1px]">Successfully saved 2Min_House_File.hiplc (Mon Oct 14 19:35:09 2019)</p>
        <button aria-label="Cook cache" className="flex h-[12px] w-[13px] items-center justify-center bg-[#333]"><Art><path d="M2 9C1 4 6 2 9 3C14 3 15 8 13 11L10 12L9 14L6 11C4 12 2 11 2 9Z" fill="#cfcfcf" /></Art></button>
        <button aria-label="Recook" className="flex h-[12px] w-[14px] items-center justify-center bg-[#2b2b2b]"><FaSyncAlt size={7} color="#5c5c5c" /></button>
        <Picker label="Update mode" value="Auto Update" center className="h-[12px] w-[63px] text-[6px]" />
      </footer>
    </div>
  );
}
